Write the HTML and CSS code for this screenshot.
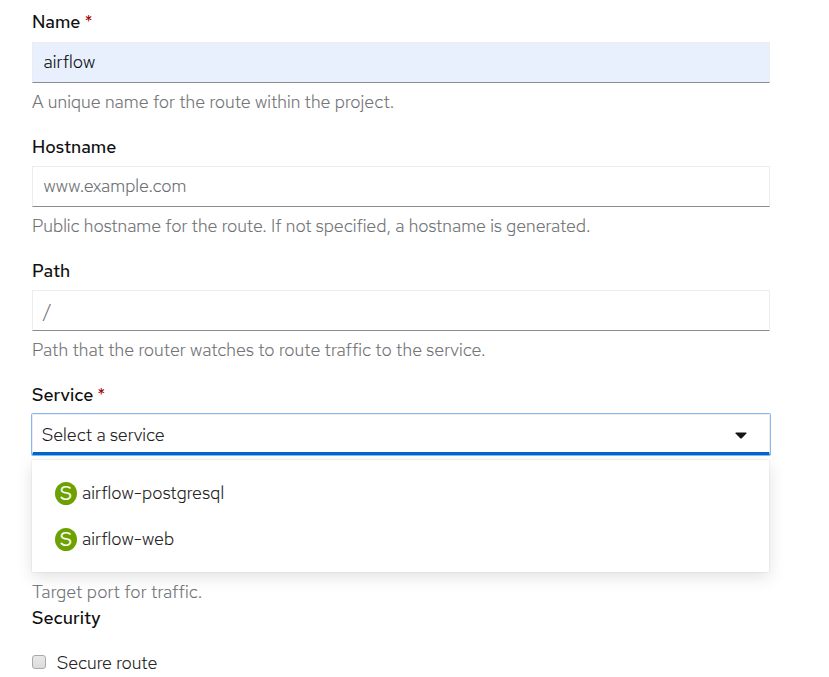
FILE: index.html
```html
<!DOCTYPE html>
<html lang="en">
<head>
<meta charset="utf-8">
<title>Create Route</title>
<link rel="stylesheet" href="styles.css">
</head>
<body>
<form class="form">
  <div class="group">
    <label class="label">Name <span class="req">*</span></label>
    <div class="input filled">airflow</div>
    <p class="help">A unique name for the route within the project.</p>
  </div>
  <div class="group">
    <label class="label">Hostname</label>
    <div class="input hint">www.example.com</div>
    <p class="help host-help">Public hostname for the route. If not specified, a hostname is generated.</p>
  </div>
  <div class="group">
    <label class="label">Path</label>
    <div class="input hint slash">/</div>
    <p class="help path-help">Path that the router watches to route traffic to the service.</p>
  </div>
  <div class="group service">
    <label class="label">Service <span class="req">*</span></label>
    <div class="select"><span>Select a service</span><svg class="caret" width="12" height="7" viewBox="0 0 12 7"><path d="M1 .5h10q1 .3.4 1L6.8 6.200q-.8.7-1.600 0L.6 1.500Q0 .8 1 .5z" fill="#151515"/></svg></div>
    <div class="menu">
      <div class="item"><span class="badge">S</span><span>airflow-postgresql</span></div>
      <div class="item"><span class="badge">S</span><span>airflow-web</span></div>
    </div>
  </div>
  <p class="help port">Target port for traffic.</p>
  <div class="label security">Security</div>
  <div class="check"><span class="box"></span><span>Secure route</span></div>
</form>
</body>
</html>
```
FILE: styles.css
```css
* { box-sizing: border-box; }
body { margin: 0; height: 677px; overflow: hidden; background: #fff; color: #101010; font: 300 18px/24px "Red Hat Text", "Open Sans", sans-serif; white-space: nowrap; -webkit-text-stroke: .15px; }
.form { width: 738px; margin: 10px 0 0 32px; }
.group { height: 124px; }
.group:first-child { height: 125px; }
.label { display: block; height: 24px; font-size: 17.9px; font-weight: 500; -webkit-text-stroke: 0; }
.req { color: #a30000; font-weight: 400; }
.input { display: flex; align-items: center; height: 41px; margin-top: 7px; padding: 0 10.5px 2px; border: 1px solid #ededed; border-bottom-color: #8a8d90; }
.group:first-child .input { margin-top: 8px; }
.filled { background: #e8f0fe; border-color: #ececf0; border-bottom-color: #8a8d90; color: #000; letter-spacing: .1px; }
.hint { color: #66696c; }
.slash { padding-bottom: 0; }
.help { margin: 7px 0 0; height: 24px; color: #6a6c6f; letter-spacing: .02px; }
.host-help { letter-spacing: -.01px; }
.path-help { letter-spacing: .04px; }
.service { height: 197px; }
.select { display: flex; align-items: center; justify-content: space-between; height: 41px; margin-top: 7px; padding: 3px 22px 0 9px; border: 1px solid #ededed; border-bottom: 3px solid #06c; box-shadow: 0 0 0 1px #86b6f4; border-radius: 1px; }
.menu { width: 737px; height: 112px; margin-top: 5px; padding: 10px 23px; background: #fff; box-shadow: 0 5px 16px rgba(3,3,3,.12), 0 0 1px rgba(3,3,3,.22); }
.item { display: flex; align-items: center; height: 46px; gap: 5px; letter-spacing: .1px; }
.badge { width: 22px; height: 23px; border-radius: 50%; background: #6ca100; color: #fff; text-align: center; font: 400 19px/23px "Red Hat Text", "Open Sans", sans-serif; letter-spacing: 0; }
.port { margin: 0; letter-spacing: .1px; }
.security { margin-top: 2px; }
.check { display: flex; align-items: center; gap: 11px; margin-top: 21px; }
.box { width: 14px; height: 14px; border: 1px solid #aaa; border-radius: 3px; background: linear-gradient(#e8e8e8, #dcdcdc); margin-bottom: 2px; }
```
